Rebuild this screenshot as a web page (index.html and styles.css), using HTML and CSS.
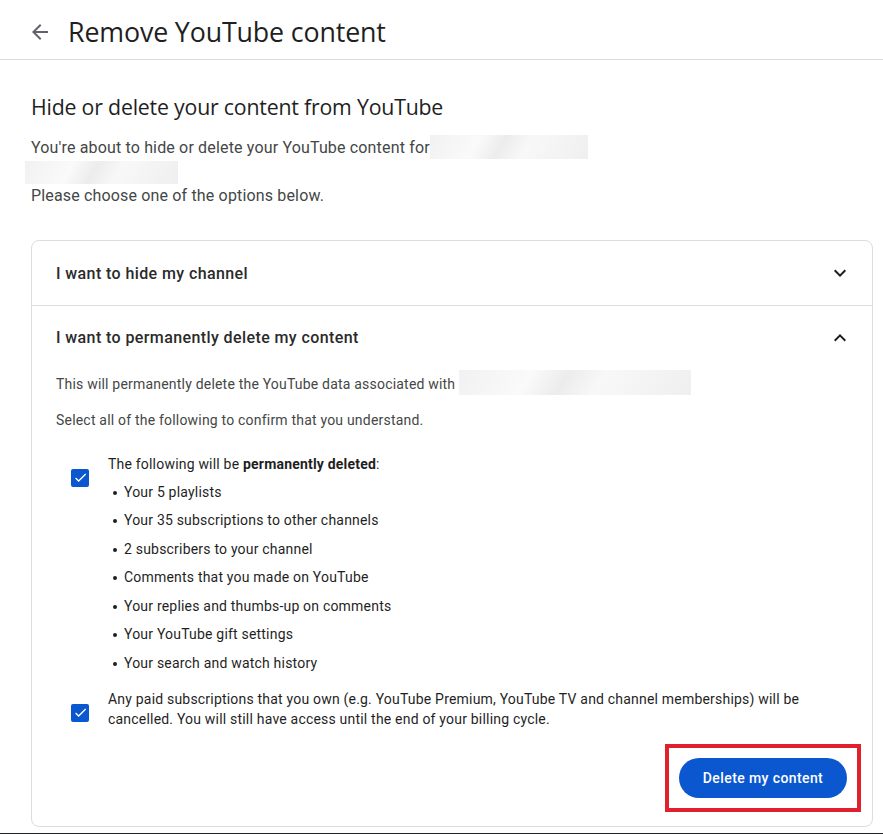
FILE: index.html
```html
<!DOCTYPE html>
<html lang="en">
<head>
<meta charset="utf-8">
<title>Remove YouTube content</title>
<link rel="stylesheet" href="styles.css">
</head>
<body>
<header class="topbar">
  <svg class="back" viewBox="0 0 24 24" width="24" height="24"><path d="M20 11H7.83l5.59-5.59L12 4l-8 8 8 8 1.41-1.41L7.83 13H20v-2z"/></svg>
  <h1 class="title">Remove YouTube content</h1>
</header>
<main class="main">
  <h2 class="heading">Hide or delete your content from YouTube</h2>
  <p class="intro">You're about to hide or delete your YouTube content for<span class="redact redact-a"></span><br><span class="redact redact-b"></span></p>
  <p class="intro choose">Please choose one of the options below.</p>

  <section class="card">
    <div class="row">
      <span class="row-title">I want to hide my channel</span>
      <svg class="chev" viewBox="0 0 24 24" width="24" height="24"><path d="M7.41 8.59L12 13.17l4.59-4.58L18 10l-6 6-6-6z"/></svg>
    </div>
    <div class="row open">
      <span class="row-title">I want to permanently delete my content</span>
      <svg class="chev" viewBox="0 0 24 24" width="24" height="24"><path d="M7.41 15.41L12 10.83l4.59 4.58L18 14l-6-6-6 6z"/></svg>
    </div>
    <div class="panel">
      <p class="small">This will permanently delete the YouTube data associated with <span class="redact redact-c"></span></p>
      <p class="small">Select all of the following to confirm that you understand.</p>

      <div class="check-item first">
        <span class="box"><svg viewBox="0 0 24 24" width="18" height="18"><path d="M9 16.17L4.83 12l-1.42 1.41L9 19 21 7l-1.41-1.41z" fill="#fff"/></svg></span>
        <div class="check-text">
          <div>The following will be <b>permanently deleted</b>:</div>
          <ul class="list">
            <li>Your 5 playlists</li>
            <li>Your 35 subscriptions to other channels</li>
            <li>2 subscribers to your channel</li>
            <li>Comments that you made on YouTube</li>
            <li>Your replies and thumbs-up on comments</li>
            <li>Your YouTube gift settings</li>
            <li>Your search and watch history</li>
          </ul>
        </div>
      </div>

      <div class="check-item second">
        <span class="box"><svg viewBox="0 0 24 24" width="18" height="18"><path d="M9 16.17L4.83 12l-1.42 1.41L9 19 21 7l-1.41-1.41z" fill="#fff"/></svg></span>
        <div class="check-text">Any paid subscriptions that you own (e.g. YouTube Premium, YouTube TV and channel memberships) will be cancelled. You will still have access until the end of your billing cycle.</div>
      </div>

      <div class="actions">
        <div class="highlight"><button class="btn">Delete my content</button></div>
      </div>
    </div>
  </section>
</main>
<div class="bottom-strip"></div>
</body>
</html>
```
FILE: styles.css
```css
* { box-sizing: border-box; }
html, body { margin: 0; padding: 0; background: #fff; }
body {
  font-family: Roboto, "Liberation Sans", Arial, sans-serif;
  color: #1f1f1f;
  width: 883px;
  height: 834px;
  overflow: hidden;
  position: relative;
}
.topbar {
  height: 60px;
  display: flex;
  align-items: center;
  padding-left: 28px;
  border-bottom: 1px solid #dadce0;
}
.back { fill: #5f6368; margin-right: 16px; margin-top: 4px; }
.title {
  margin: 0;
  font-family: "Open Sans", Roboto, sans-serif;
  font-weight: 400;
  font-size: 26.8px;
  color: #1f1f1f;
  letter-spacing: -0.15px;
  padding-top: 4px;
}
.main { padding: 0 10px 0 31px; }
.heading {
  margin: 33px 0 0;
  font-family: "Open Sans", Roboto, sans-serif;
  font-weight: 400;
  font-size: 21.3px;
  color: #1f1f1f;
  line-height: 28px;
  letter-spacing: -0.2px;
}
.intro {
  margin: 15px 0 0;
  font-size: 16px;
  line-height: 24px;
  color: #444746;
  letter-spacing: 0.16px;
}
.intro.choose { margin-top: 0; }
.redact {
  display: inline-block;
  vertical-align: top;
  background: linear-gradient(120deg, #f1f1f1 0%, #fafafa 30%, #ececec 45%, #f8f8f8 60%, #efefef 100%);
}
.redact-a { width: 158px; height: 24px; margin-top: -1px; }
.redact-b { width: 153px; height: 23px; margin-left: -6px; margin-top: 1px; }
.redact-c { width: 232px; height: 25px; vertical-align: middle; margin-top: -6px; }

.card {
  margin-top: 32px;
  border: 1px solid #dadce0;
  border-radius: 8px;
  width: 842px;
  height: 587px;
}
.row {
  height: 64px;
  display: flex;
  align-items: center;
  justify-content: space-between;
  padding: 0 20px 0 24px;
}
.row + .row { border-top: 1px solid #dadce0; }
.row-title {
  font-family: Roboto, sans-serif;
  font-size: 16px;
  font-weight: 500;
  color: #2a2a2a;
  letter-spacing: 0.4px;
}
.chev { fill: #1f1f1f; }
.panel { padding: 0 24px 0 24px; }
.small {
  margin: 0;
  font-size: 14px;
  line-height: 20px;
  color: #444746;
  letter-spacing: 0.2px;
}
.panel .small:first-child { margin-top: 5px; }
.panel .small + .small { margin-top: 15px; }

.check-item {
  display: flex;
  align-items: center;
  font-size: 14px;
  color: #1f1f1f;
  letter-spacing: 0.2px;
}
.check-item.first { margin-top: 24px; align-items: flex-start; }
.check-item.second { margin-top: 16px; }
.box {
  flex: none;
  width: 18px;
  height: 18px;
  border-radius: 2px;
  background: #0b57d0;
  margin: 0 19px 0 15px;
  display: flex;
  align-items: center;
  justify-content: center;
}
.box svg { width: 15px; height: 15px; }
.check-item.first .box { margin-top: 15px; }
.check-item.second .box { margin-top: 8px; }
.check-text { line-height: 20px; max-width: 705px; }
.check-text b { font-weight: 700; }
.list {
  margin: 8px 0 0;
  padding-left: 16px;
  list-style: none;
}
.list li {
  position: relative;
  line-height: 20px;
  margin-bottom: 8.5px;
}
.list li:last-child { margin-bottom: 0; }
.list li::before {
  content: "";
  position: absolute;
  left: -11px;
  top: 9px;
  width: 4px;
  height: 4px;
  border-radius: 50%;
  background: #1f1f1f;
}
.actions {
  display: flex;
  justify-content: flex-end;
  margin-top: 15px;
  margin-right: -13px;
}
.highlight {
  border: 4px solid #e0202c;
  padding: 10px 10px;
}
.btn {
  width: 168px;
  height: 40px;
  border: none;
  border-radius: 20px;
  background: #0b57d0;
  color: #fff;
  font-family: Roboto, sans-serif;
  font-size: 14px;
  font-weight: 500;
  letter-spacing: 0.4px;
}
.bottom-strip {
  position: absolute;
  left: 0;
  right: 0;
  bottom: 0;
  height: 1px;
  background: #202124;
}
```
